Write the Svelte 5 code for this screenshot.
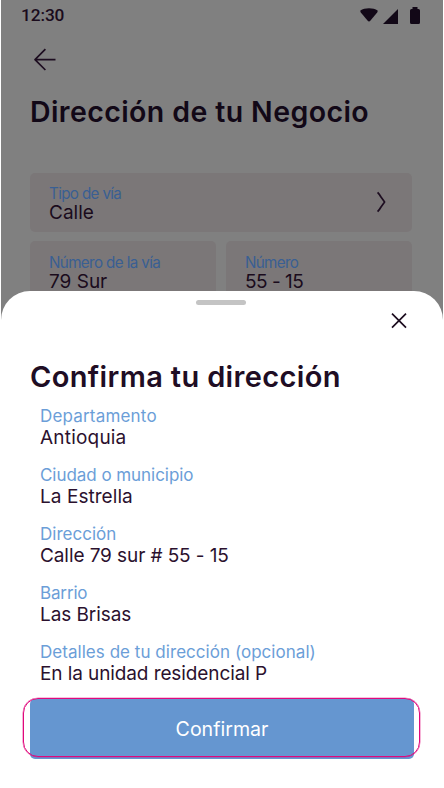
<script>
  const fields = [
    { label: 'Departamento', value: 'Antioquia', ls: 0.18, vs: 0.2 },
    { label: 'Ciudad o municipio', value: 'La Estrella', ls: -0.05, vs: 0.05 },
    { label: 'Dirección', value: 'Calle 79 sur # 55 - 15', ls: 0.02, vs: -0.09 },
    { label: 'Barrio', value: 'Las Brisas', ls: -0.15, vs: -0.08 },
    { label: 'Detalles de tu dirección (opcional)', value: 'En la unidad residencial P', ls: 0.04, vs: -0.1 }
  ];
</script>

<div class="screen">
  <div class="page">
    <header class="status">
      <span class="time">12:30</span>
      <svg class="indicators" width="62" height="20" viewBox="0 0 62 20" fill="#120817">
        <path d="M0.4 6.6C4.5 3.4 13.5 3.4 17.6 6.6Q18 7.4 17.2 8.4L10.5 16.6Q9 18.4 7.5 16.6L0.8 8.4Q0 7.4 0.4 6.6Z" />
        <path d="M38 5V20H23Z" />
        <path d="M50 6.5Q50 5 51.5 5H52.5V3H57.5V5H58.5Q60 5 60 6.5V18.5Q60 20 58.5 20H51.5Q50 20 50 18.5Z" />
      </svg>
    </header>
    <button class="back" aria-label="Volver">
      <svg width="24" height="24" viewBox="0 0 24 24"><path d="M12.4 2.2L2 12.6L12.4 23M2 12.6H22.5" /></svg>
    </button>
    <h1>Dirección de tu Negocio</h1>
    <div class="form">
      <div class="card wide">
        <div>
          <div class="label">Tipo de vía</div>
          <div class="value">Calle</div>
        </div>
        <svg width="14" height="24" viewBox="0 0 14 24"><path d="M2.6 2.4Q4.8 4.8 6 7L9.6 12L6 17Q4.8 19.2 2.6 21.6" /></svg>
      </div>
      <div class="row">
        <div class="card">
          <div>
            <div class="label long">Número de la vía</div>
            <div class="value">79 Sur</div>
          </div>
        </div>
        <div class="card">
          <div>
            <div class="label">Número</div>
            <div class="value digits">55 - 15</div>
          </div>
        </div>
      </div>
    </div>
  </div>

  <section class="sheet">
    <div class="handle"></div>
    <button class="close" aria-label="Cerrar">
      <svg width="18" height="18" viewBox="0 0 18 18"><path d="M2 1.7L16 15.7M16 1.7L2 15.7" /></svg>
    </button>
    <h2>Confirma tu dirección</h2>
    <div class="fields">
      {#each fields as f}
        <div class="field">
          <div class="flabel" style="letter-spacing: {f.ls}px">{f.label}</div>
          <div class="fvalue" style="letter-spacing: {f.vs}px">{f.value}</div>
        </div>
      {/each}
    </div>
    <button class="confirm"><span>Confirmar</span></button>
  </section>
</div>

<style>
  :global(body) { margin: 0; background: #fff; }
  .screen {
    position: relative;
    box-sizing: border-box;
    width: 444px;
    height: 788px;
    padding: 0 1px;
    overflow: hidden;
    background: #fff;
    font-family: Inter, sans-serif;
    color: #2b112e;
    white-space: nowrap;
  }
  button { display: block; border: 0; padding: 0; background: none; font: inherit; }
  svg { display: block; }
  svg path { stroke-linejoin: round; }
  h1, h2 { margin: 0; font-weight: 600; }
  .page { box-sizing: border-box; height: 330px; background: #808080; padding: 0 31px 0 29px; overflow: hidden; color: #1a0b1c; }
  .status { display: flex; justify-content: space-between; height: 32px; margin: 0 -9px; padding-top: 4px; box-sizing: border-box; }
  .time { font: 500 17.3px/23px Roboto, sans-serif; letter-spacing: -0.1px; }
  .indicators { margin-right: -1px; }
  .back { margin: 15px 0 0 3px; }
  .back path, .wide path, .close path { fill: none; stroke: #1d0d20; stroke-width: 1.7; }
  h1 { margin-top: 23px; font-size: 28.5px; line-height: 36px; letter-spacing: 0.4px; color: #120817; }
  .form { margin-top: 43px; }
  .card { box-sizing: border-box; height: 59px; padding: 12px 20px 0 19px; background: #7b7778; border-radius: 5px; display: flex; justify-content: space-between; }
  .wide { padding-top: 11px; }
  .wide svg { margin-top: 6px; margin-right: 3px; }
  .row { display: grid; grid-template-columns: 186px 186px; gap: 10px; margin-top: 9px; }
  .label { font-size: 15.2px; line-height: 19px; letter-spacing: -0.65px; color: #395f93; }
  .value { font-size: 19px; line-height: 19px; }
  .digits { letter-spacing: -0.5px; }
  .long { letter-spacing: -0.62px; }
  .sheet { position: absolute; left: 1px; right: 1px; top: 291px; height: 497px; box-sizing: border-box; padding: 9px 29px 0; background: #fff; border-radius: 29px 29px 0 0; }
  .handle { width: 50px; height: 5px; margin: 0 auto 0 166px; border-radius: 3px; background: #c4c4c4; }
  .close { margin: 7px 6px 0 auto; }
  h2 { margin-top: 29px; font-size: 29px; line-height: 36px; letter-spacing: 0.35px; color: #200d24; }
  .fields { margin: 11px 0 0 10px; }
  .field { height: 59.1px; }
  .flabel { font-size: 17px; line-height: 21px; color: #6b9ed8; }
  .fvalue { font-size: 19px; line-height: 22px; }
  .confirm { position: relative; width: 384px; height: 60px; margin-top: -2.5px; padding-top: 1px; border-radius: 5px; background: #6596d0; color: #fff; font-size: 19.6px; }
  .confirm::after { content: ''; position: absolute; inset: -1px -6px 2px -7px; border: 1px solid #e0087c; box-shadow: 0 0 0 0.3px #e0087c; border-radius: 15px; }
</style>
